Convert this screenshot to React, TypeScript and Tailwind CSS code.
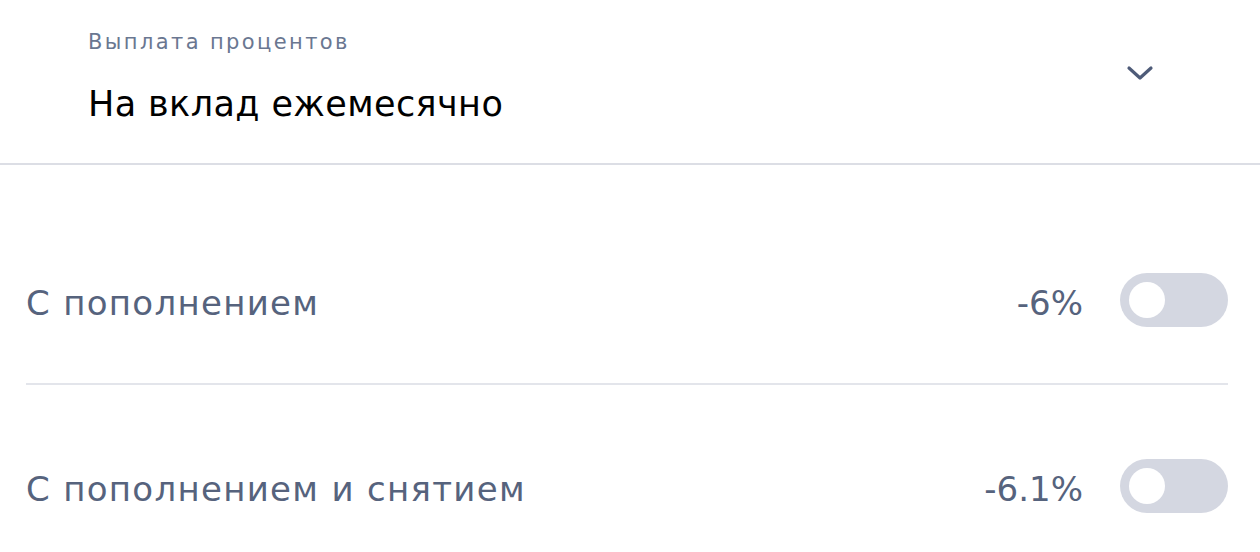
import React from 'react';

const Toggle: React.FC = () => (
    <div className="w-[108px] h-[54px] rounded-full bg-[#d4d7e1] flex items-center pl-[9px]">
        <div className="w-[36px] h-[36px] rounded-full bg-white" />
    </div>
);

const OptionRow: React.FC<{ label: string; value: string }> = ({ label, value }) => (
    <div className="flex items-center h-[54px]">
        <span className="flex-1 text-[34px] leading-[54px] pt-[6px] tracking-[1.3px] text-[#56637d]">{label}</span>
        <span className="text-[34px] leading-[54px] pt-[6px] text-[#56637d] mr-[37px]">{value}</span>
        <Toggle />
    </div>
);

export default function App() {
    return (
        <div className="w-[1260px] h-[552px] bg-white overflow-hidden" style={{ fontFamily: '"DejaVu Sans", "Noto Sans", sans-serif' }}>
            {/* Select field */}
            <div className="h-[165px] border-b-2 border-[#dcdee5] flex items-start pl-[88px] pr-[106px]">
                <div className="flex-1 pt-[27px]">
                    <div className="text-[21px] leading-[30px] tracking-[2.4px] text-[#6a7791]">Выплата процентов</div>
                    <div className="text-[35px] leading-[44px] tracking-[0.4px] text-black mt-[25px]">На вклад ежемесячно</div>
                </div>
                <svg className="mt-[64px]" width="28" height="18" viewBox="0 0 28 18" fill="none">
                    <path d="M3 4 L14 14 L25 4" stroke="#4e5b78" strokeWidth="3.2" strokeLinecap="round" strokeLinejoin="round" />
                </svg>
            </div>

            {/* Options */}
            <div className="pl-[26px] pr-[32px] pt-[108px]">
                <OptionRow label="С пополнением" value="-6%" />
                <div className="h-[2px] bg-[#e3e5eb] mt-[56px] mb-[74px]" />
                <OptionRow label="С пополнением и снятием" value="-6.1%" />
            </div>
        </div>
    );
}
